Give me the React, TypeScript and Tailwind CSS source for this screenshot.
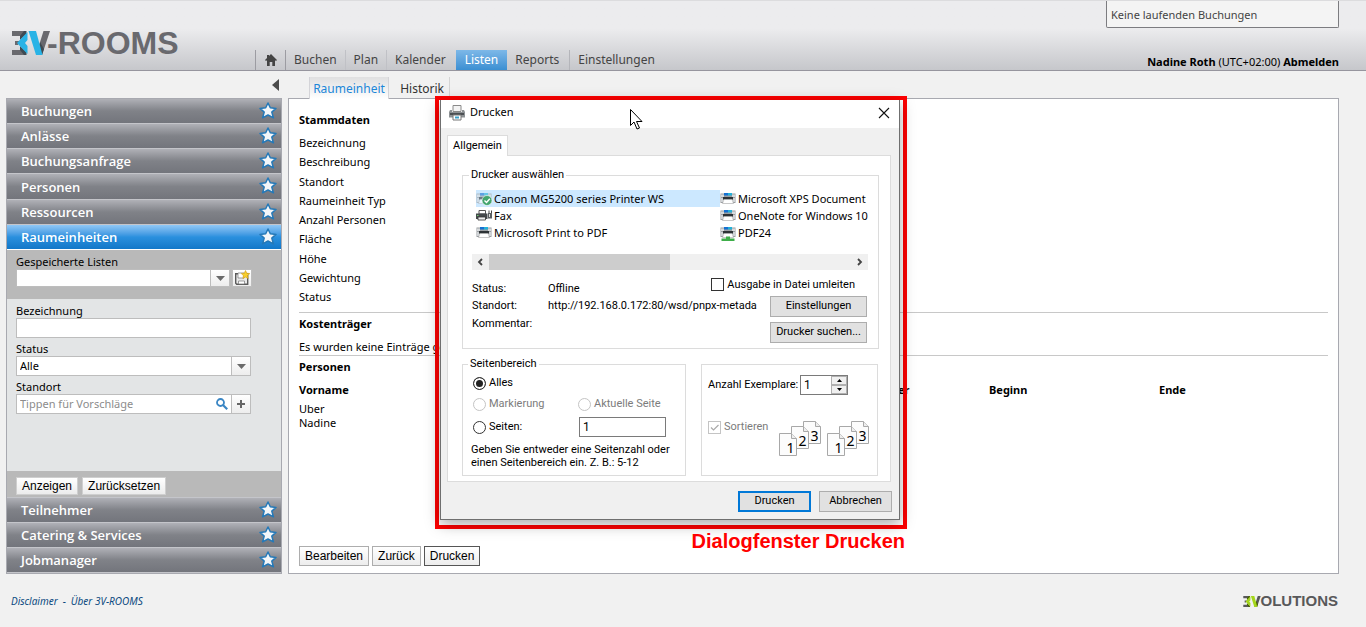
import type { ReactNode } from "react";

const SECTIONS_TOP = ["Buchungen", "Anlässe", "Buchungsanfrage", "Personen", "Ressourcen"];
const SECTIONS_BOTTOM = ["Teilnehmer", "Catering & Services", "Jobmanager"];
const NAV = [
  { label: "Buchen", className: "border-r border-[#c0c1c6] px-2" },
  { label: "Plan", className: "border-r border-[#c0c1c6] px-2" },
  { label: "Kalender", className: "pr-[10px] pl-2" },
  { label: "Listen", className: "bg-linear-to-b from-[#7db8e8] to-[#3a8fd2] px-[9px] text-white" },
  { label: "Reports", className: "border-r border-[#b4b5ba] pr-[10px] pl-2" },
  { label: "Einstellungen", className: "px-2" },
];
const FIELDS = [
  "Bezeichnung",
  "Beschreibung",
  "Standort",
  "Raumeinheit Typ",
  "Anzahl Personen",
  "Fläche",
  "Höhe",
  "Gewichtung",
  "Status",
];

function Mark({ className, accent, facet, base }: { className: string; accent: string; facet: string; base: string }) {
  return (
    <svg viewBox="0 0 38 24" className={className} aria-hidden="true">
      <path d="M0 0h14l-4 5H0zM3 10h5l-2 4H3zM0 19h10l4 5H0z" fill={base} />
      <path d="M8 5L12 0h2.500v3L8 9zM8 19l4 5h2.500v-3L8 15z" fill={facet} />
      <path d="M15.500 1v8L13 12l2.500 3v8L5 12z" fill={accent} />
      <path d="M31.500 0H38l-8 24h-6z" fill={base} />
      <path d="M28 11l4 7-2 6h-4z" fill={facet} />
      <path d="M16.500 0H24l6.500 24H24z" fill={accent} />
    </svg>
  );
}

function Star() {
  return (
    <svg viewBox="0 0 18 17" className="mt-px h-[17px] w-[18px] shrink-0 self-start" aria-hidden="true">
      <path
        d="M9 1l2.300 4.800 5.700.6-4.200 3.700 1.600 5.700L9 13l-5.400 2.800 1.600-5.700L1 6.400l5.700-.6z"
        fill="#f3f6f9"
        stroke="#2579b8"
        strokeWidth="1.500"
        strokeLinejoin="round"
      />
    </svg>
  );
}

function Section({ label, active = false, tall = false }: { label: string; active?: boolean; tall?: boolean }) {
  return (
    <button
      type="button"
      className={`flex w-full items-center justify-between border-b pt-0.5 pr-1 pl-3.5 font-['Open_Sans',sans-serif] text-[13px] font-semibold text-white ${
        tall ? "h-[26px]" : "h-[25px]"
      } ${
        active
          ? "border-white bg-linear-to-b from-[#8fc7f5] via-[#2a90de] to-[#1277c8]"
          : "border-[#c4c5ca] bg-linear-to-b from-[#b0b1b7] via-[#808288] to-[#73757c]"
      }`}
    >
      {label}
      <Star />
    </button>
  );
}

function Caret() {
  return (
    <svg viewBox="0 0 9 5" className="h-[5px] w-[9px]" aria-hidden="true">
      <path d="M0 0h9L4.500 5z" fill="#6a6a6a" />
    </svg>
  );
}

function PrinterIcon({ kind }: { kind: "ok" | "fax" | "plain" | "net" }) {
  return (
    <svg viewBox="0 0 17 17" className="h-[17px] w-[17px] shrink-0" aria-hidden="true">
      {kind === "fax" ? (
        <g>
          <path d="M3 3.500h6.500V7H3z" fill="#fff" stroke="#555" />
          <path d="M0 6.500h11.500V12H0z" fill="#45494c" />
          <path d="M1 8h1.500v1H1z" fill="#6fd06f" />
          <path d="M2 10h7.500v3H2z" fill="#eee" stroke="#333" strokeWidth="0.800" />
          <path d="M12 6h4v5.500h-4z" fill="#5b5f62" />
          <path d="M13 7h1v3h-1z" fill="#ddd" />
          <path d="M13 3.500V6M15.500 3.500V6" stroke="#444" />
        </g>
      ) : (
        <g opacity={kind === "ok" ? 0.6 : 1}>
          <path d="M.5 3.500h15V13h-2.500V10H3v3H.500z" fill="#9a9ea1" />
          <path d="M1 4.500h3V7H1zM12 4.500h3V7h-3z" fill="#d8dbdd" />
          <path d="M1 8h2v4H1zM13 8h2v4h-2z" fill="#d0d3d6" />
          <path d="M4 3h4v2.500H4z" fill="#1470d2" />
          <path d="M8 3h4v2.500H8z" fill="#22b0d8" />
          <path d="M3 7h10v2.500H3z" fill="#2d3235" />
          <path d="M4 9.500h8l1.500 4h-11z" fill="#fff" stroke="#a5a5a5" strokeWidth="0.600" />
          {kind === "net" && <path d="M6 12.500h4v2h4.500V17h-13v-2.500H6z" fill="#3eae49" />}
        </g>
      )}
      {kind === "ok" && (
        <g>
          <circle cx="11" cy="10.500" r="5" fill="#43a56f" stroke="#fff" strokeWidth="0.600" />
          <path d="M8.500 10.500l2 2 3.300-3.800" fill="none" stroke="#fff" strokeWidth="1.400" />
        </g>
      )}
    </svg>
  );
}

function TitlePrinter() {
  return (
    <svg viewBox="0 0 16 16" className="h-4 w-4" aria-hidden="true">
      <path d="M4 .5h8v6H4z" fill="#f4f4f4" stroke="#8a8a8a" />
      <path d="M1 5h2v2h10V5h2l1 2v5.500H0V7z" fill="#8d9194" />
      <path d="M1 8h14v2H1z" fill="#4b4f52" />
      <path d="M4 10h8v5H4z" fill="#fff" stroke="#777" />
      <path d="M6 11.500h4v2H6z" fill="#3aa0c8" />
    </svg>
  );
}

function Pages() {
  const sheets = [
    { x: 0, y: 12, n: "1" },
    { x: 12, y: 5, n: "2" },
    { x: 24, y: 0, n: "3" },
  ];
  return (
    <svg viewBox="0 0 43 36" className="h-9 w-[43px]" aria-hidden="true">
      {[...sheets].reverse().map((s) => (
        <g key={s.n} transform={`translate(${s.x} ${s.y})`}>
          <path d="M.5.500h12l5 5v17H.5z" fill="#fcfcfc" stroke="#a8a8a8" />
          <path d="M12.500.500v5h5" fill="#eee" stroke="#a8a8a8" />
          <text x="11.500" y="20" textAnchor="middle" fontSize="14" fontFamily="Noto Sans" fill="#000">
            {s.n}
          </text>
        </g>
      ))}
    </svg>
  );
}

function Group({ legend, className, children }: { legend?: string; className: string; children: ReactNode }) {
  return (
    <fieldset className={`min-w-0 shrink-0 border border-[#dcdcdc] ${className}`}>
      {legend && <legend className="-ml-[3px] px-0.5 leading-[14px]">{legend}</legend>}
      {children}
    </fieldset>
  );
}

function Radio({ id, label, checked = false, disabled = false }: { id: string; label: string; checked?: boolean; disabled?: boolean }) {
  return (
    <div className="flex items-center gap-[3px]">
      <input
        id={id}
        type="radio"
        name="range"
        defaultChecked={checked}
        disabled={disabled}
        className="size-[13px] appearance-none rounded-full border border-[#333] bg-white checked:bg-[#222] checked:shadow-[inset_0_0_0_2px_#fff] disabled:border-[#c4c4c4]"
      />
      <label htmlFor={id} className={disabled ? "text-[#7c7c7c]" : ""}>
        {label}
      </label>
    </div>
  );
}

function PrintDialog() {
  const btn = "flex h-[21px] items-center justify-center border border-[#adadad] bg-[#e1e1e1]";
  return (
    <div
      role="dialog"
      aria-label="Drucken"
      className="ml-px flex h-[420px] w-[460px] flex-col border border-t-0 border-[#6f6f6f] bg-[#f0f0f0] font-['Roboto',sans-serif] text-[11px] text-black shadow-[0_4px_14px_rgba(0,0,0,0.35)]"
    >
      <div className="flex h-7 shrink-0 items-center bg-white pr-[9px] pb-[3px] pl-2 font-['Noto_Sans',sans-serif] text-[11px]">
        <TitlePrinter />
        <span className="ml-[5px] flex-1">Drucken</span>
        <button type="button" aria-label="Schliessen">
          <svg viewBox="0 0 12 12" className="h-3 w-3" aria-hidden="true">
            <path d="M1 1l10 10M11 1L1 11" stroke="#111" strokeWidth="1.100" />
          </svg>
        </button>
      </div>
      <div className="px-[6px] pt-[7px]">
        <div className="-mb-px flex">
          <button type="button" className="relative h-[21px] w-[61px] border border-b-0 border-[#dcdcdc] bg-white">
            Allgemein
          </button>
        </div>
        <div className="h-[327px] w-[444px] border border-[#dcdcdc] bg-white pt-3 pl-[14px]">
          <Group legend="Drucker auswählen" className="h-[181px] w-[417px] pr-2 pl-[9px]">
            <div className="mt-2 flex overflow-hidden pl-1 font-['Noto_Sans',sans-serif] text-[11px] leading-[17px] whitespace-nowrap">
              <ul className="w-[244px] shrink-0">
                <li className="flex gap-px bg-[#cce8ff]">
                  <PrinterIcon kind="ok" />
                  Canon MG5200 series Printer WS
                </li>
                <li className="flex gap-px">
                  <PrinterIcon kind="fax" />
                  Fax
                </li>
                <li className="flex gap-px">
                  <PrinterIcon kind="plain" />
                  Microsoft Print to PDF
                </li>
              </ul>
              <ul className="w-[149px]">
                <li className="flex gap-px">
                  <PrinterIcon kind="plain" />
                  Microsoft XPS Document
                </li>
                <li className="flex gap-px">
                  <PrinterIcon kind="plain" />
                  OneNote for Windows 10
                </li>
                <li className="flex gap-px">
                  <PrinterIcon kind="net" />
                  PDF24
                </li>
              </ul>
            </div>
            <div className="mt-[13px] flex h-4 w-[396px] items-center justify-between bg-[#f0f0f0]">
              <svg viewBox="0 0 17 16" className="h-4 w-[17px]" aria-hidden="true">
                <path d="M10 5L7 8l3 3" fill="none" stroke="#444" strokeWidth="1.800" />
              </svg>
              <div className="mr-auto h-4 w-[181px] bg-[#cdcdcd]" />
              <svg viewBox="0 0 17 16" className="h-4 w-[17px]" aria-hidden="true">
                <path d="M7 5l3 3-3 3" fill="none" stroke="#444" strokeWidth="1.800" />
              </svg>
            </div>
            <div className="mt-2 flex gap-[18px] whitespace-nowrap">
              <dl className="grid w-[280px] shrink-0 grid-cols-[76px_204px] content-start leading-[17px]">
                <dt className="pt-0.5">Status:</dt>
                <dd className="pt-0.5">Offline</dd>
                <dt>Standort:</dt>
                <dd>http://192.168.0.172:80/wsd/pnpx-metada</dd>
                <dt className="pt-px">Kommentar:</dt>
                <dd />
              </dl>
              <div className="flex w-[97px] shrink-0 flex-col items-end gap-[5px]">
                <div className="mr-3 flex items-center gap-[3px]">
                  <input id="tofile" type="checkbox" className="size-[13px] shrink-0 appearance-none border border-[#333] bg-white" />
                  <label htmlFor="tofile" className="leading-[13px]">
                    Ausgabe in Datei umleiten
                  </label>
                </div>
                <button type="button" className={`${btn} w-[97px]`}>
                  Einstellungen
                </button>
                <button type="button" className={`${btn} w-[97px]`}>
                  Drucker suchen...
                </button>
              </div>
            </div>
          </Group>
          <div className="mt-2 flex gap-[15px]">
            <Group legend="Seitenbereich" className="h-[119px] w-[224px] px-2">
              <div className="grid grid-cols-[105px_1fr] items-center pt-0.5 pl-0.5">
                <div className="flex h-5 items-center">
                  <Radio id="all" label="Alles" checked />
                </div>
                <span />
                <div className="flex h-[22px] items-center">
                  <Radio id="selection" label="Markierung" disabled />
                </div>
                <Radio id="current" label="Aktuelle Seite" disabled />
                <div className="flex h-6 items-center">
                  <Radio id="pages" label="Seiten:" />
                </div>
                <input
                  aria-label="Seiten"
                  defaultValue="1"
                  className="ml-px h-5 w-[87px] border border-[#7a7a7a] bg-white px-[3px] text-[12px]"
                />
              </div>
              <p className="mt-1 leading-[13px] whitespace-nowrap">
                Geben Sie entweder eine Seitenzahl oder
                <br />
                einen Seitenbereich ein. Z. B.: 5-12
              </p>
            </Group>
            <Group className="mt-[7px] h-28 w-[177px] px-1.5 pt-[10px]">
              <div className="flex h-5 items-center">
                <label htmlFor="copies" className="w-[92px]">
                  Anzahl Exemplare:
                </label>
                <div className="flex h-5 w-12 border border-[#7a7a7a] bg-white">
                  <input id="copies" defaultValue="1" className="w-[30px] px-[3px] text-[12px]" />
                  <div className="flex flex-1 flex-col">
                    <button type="button" aria-label="Mehr" className="flex flex-1 items-center justify-center border border-[#b0b0b0] bg-[#f0f0f0]">
                      <svg viewBox="0 0 5 3" className="h-[3px] w-[5px]">
                        <path d="M0 3h5L2.500 0z" />
                      </svg>
                    </button>
                    <button type="button" aria-label="Weniger" className="flex flex-1 items-center justify-center border border-[#b0b0b0] bg-[#f0f0f0]">
                      <svg viewBox="0 0 5 3" className="h-[3px] w-[5px]">
                        <path d="M0 0h5L2.500 3z" />
                      </svg>
                    </button>
                  </div>
                </div>
              </div>
              <div className="mt-[26px] flex">
                <div className="flex h-[13px] w-[71px] items-center gap-[3px]">
                  <span className="relative flex size-[13px]">
                    <input id="collate" type="checkbox" defaultChecked disabled className="size-[13px] appearance-none border border-[#c4c4c4] bg-white" />
                    <svg viewBox="0 0 13 13" className="absolute inset-0 h-[13px] w-[13px]" aria-hidden="true">
                      <path d="M3 6.500l2.500 2.500L10.500 4" fill="none" stroke="#aaa" strokeWidth="1.200" />
                    </svg>
                  </span>
                  <label htmlFor="collate" className="text-[#7c7c7c]">
                    Sortieren
                  </label>
                </div>
                <div className="flex gap-[5px]">
                  <Pages />
                  <Pages />
                </div>
              </div>
            </Group>
          </div>
        </div>
        <div className="mt-[9px] flex justify-end gap-2 pr-px">
          <button type="button" className="flex h-[21px] w-[73px] items-center justify-center border-2 border-[#0078d7] bg-[#e1e1e1]">
            Drucken
          </button>
          <button type="button" className={`${btn} w-[73px]`}>
            Abbrechen
          </button>
        </div>
      </div>
    </div>
  );
}

function Sidebar() {
  const box = "border border-[#bdbdbd] bg-white";
  const small = "flex w-5 shrink-0 items-center justify-center border border-[#bdbdbd] bg-linear-to-b from-white to-[#ededed]";
  const action = "h-[18px] border border-[#cfcfcf] bg-linear-to-b from-white to-[#ececec] px-[5px] leading-4";
  return (
    <aside className="w-[276px] shrink-0">
      <div className="flex h-[27px] items-center justify-end pr-[3px]">
        <button type="button" aria-label="Seitenleiste einklappen">
          <svg viewBox="0 0 7 12" className="h-3 w-[7px]" aria-hidden="true">
            <path d="M7 0v12L0 6z" fill="#4c4c4c" />
          </svg>
        </button>
      </div>
      <div className="border border-[#a8a9b0]">
        {SECTIONS_TOP.map((s) => (
          <Section key={s} label={s} tall={s === "Personen"} />
        ))}
        <Section label="Raumeinheiten" active />
        <div className="h-[49px] bg-[#b9b9b9] px-[9px] pt-1">
          <label htmlFor="saved" className="block leading-[15px]">
            Gespeicherte Listen
          </label>
          <div className="flex h-[18px]">
            <input id="saved" className={`${box} w-[195px]`} />
            <button type="button" aria-label="Liste öffnen" className={`${small} -ml-px`}>
              <Caret />
            </button>
            <button type="button" aria-label="Liste speichern" className={`${small} ml-[2px]`}>
              <svg viewBox="0 0 16 16" className="h-4 w-4" aria-hidden="true">
                <path d="M1.700 3.700h12v10.600h-11l-1-1z" fill="#e9e9e9" stroke="#5a5a5a" strokeWidth="1.400" />
                <path d="M4 3h6v5H4z" fill="#fff" stroke="#777" strokeWidth="0.700" />
                <path d="M4.500 11h6v3h-6z" fill="#fff" stroke="#777" strokeWidth="0.700" />
                <path d="M11.500.500l1.300 2.700 3 .4-2.200 2 .6 2.900-2.700-1.400-2.600 1.400.5-2.900-2.100-2 3-.4z" fill="#f8cf2c" stroke="#d29a12" strokeWidth="0.600" />
              </svg>
            </button>
          </div>
        </div>
        <div className="flex h-[172px] flex-col gap-[3px] bg-[#e3e5e6] px-[9px] pt-1">
          <div>
            <label htmlFor="name" className="block leading-[15px]">
              Bezeichnung
            </label>
            <input id="name" className={`${box} block h-5 w-[235px]`} />
          </div>
          <div>
            <label htmlFor="status" className="block leading-[15px]">
              Status
            </label>
            <div className="flex h-5 w-[235px]">
              <select id="status" className={`${box} flex-1 appearance-none px-[3px]`}>
                <option>Alle</option>
              </select>
              <span className={`${small} -ml-px`}>
                <Caret />
              </span>
            </div>
          </div>
          <div>
            <label htmlFor="place" className="block leading-[15px]">
              Standort
            </label>
            <div className="flex h-5 w-[235px]">
              <div className={`${box} flex flex-1 items-center px-[3px]`}>
                <input id="place" placeholder="Tippen für Vorschläge" className="min-w-0 flex-1 placeholder:text-[#8c8c8c]" />
                <svg viewBox="0 0 12 12" className="h-3 w-3" aria-hidden="true">
                  <circle cx="4.500" cy="4.500" r="3.500" fill="none" stroke="#3a86c4" strokeWidth="1.800" />
                  <path d="M7 7l4.200 4.200" stroke="#3a86c4" strokeWidth="2.200" />
                </svg>
              </div>
              <button type="button" aria-label="Standort hinzufügen" className={`${small} -ml-px`}>
                <svg viewBox="0 0 8 8" className="h-2 w-2" aria-hidden="true">
                  <path d="M4 0v8M0 4h8" stroke="#666" strokeWidth="2" />
                </svg>
              </button>
            </div>
          </div>
        </div>
        <div className="flex h-[27px] items-start gap-1 border-b border-[#c4c5ca] bg-[#b9b9b9] px-[9px] pt-[6px] font-['Liberation_Sans',sans-serif] text-[12px]">
          <button type="button" className={action}>
            Anzeigen
          </button>
          <button type="button" className={action}>
            Zurücksetzen
          </button>
        </div>
        {SECTIONS_BOTTOM.map((s) => (
          <Section key={s} label={s} />
        ))}
      </div>
    </aside>
  );
}

function Details() {
  const btn = "h-5 border border-[#adadad] bg-linear-to-b from-white to-[#ededed] px-[5px] leading-[18px]";
  return (
    <main className="flex min-w-0 flex-1 flex-col">
      <nav className="flex h-[27px] items-end pl-[21px] text-[12px]">
        <a
          href="#raumeinheit"
          className="relative -mb-px flex h-[22px] w-[80px] items-center justify-center border-x border-[#d4d4d8] bg-linear-to-b from-[#e0e0e1] to-white pt-0.5 text-[#1c86d8]"
        >
          Raumeinheit
        </a>
        <a href="#historik" className="flex h-[21px] w-[61px] items-center justify-end border-r border-[#d4d4d4] pt-0.5 pr-[5px] text-[#333]">
          Historik
        </a>
      </nav>
      <section className="flex flex-1 flex-col border border-[#a8a9b0] bg-white px-[10px] pt-3 pb-[7px]">
        <h2 className="leading-[17px] font-bold">Stammdaten</h2>
        <ul className="mt-[6px] flex h-[171px] flex-col justify-between leading-[17px]">
          {FIELDS.map((f) => (
            <li key={f}>{f}</li>
          ))}
        </ul>
        <h2 className="mt-[7px] border-t border-[#c8c8c8] pt-[2px] leading-[17px] font-bold">Kostenträger</h2>
        <p className="mt-[6px] leading-[17px]">Es wurden keine Einträge gefunden.</p>
        <h2 className="border-t border-[#c8c8c8] pt-[2px] leading-[17px] font-bold">Personen</h2>
        <table className="mt-[6px] w-full table-fixed text-left leading-[14px]">
          <thead>
            <tr className="leading-[17px]">
              <th className="w-[599px] pb-1">Vorname</th>
              <th className="w-[91px] pb-1">er</th>
              <th className="w-[170px] pb-1">Beginn</th>
              <th className="pb-1">Ende</th>
            </tr>
          </thead>
          <tbody>
            <tr>
              <td colSpan={4}>Uber</td>
            </tr>
            <tr>
              <td colSpan={4}>Nadine</td>
            </tr>
          </tbody>
        </table>
        <div className="mt-auto flex gap-[3px] font-['Liberation_Sans',sans-serif] text-[12px]">
          <button type="button" className={btn}>
            Bearbeiten
          </button>
          <button type="button" className={btn}>
            Zurück
          </button>
          <button type="button" className="h-5 border border-[#555] bg-linear-to-b from-white to-[#ededed] px-[5px] leading-[18px]">
            Drucken
          </button>
        </div>
      </section>
    </main>
  );
}

export default function App() {
  return (
    <div className="relative min-h-screen bg-[#f1f1f1] font-['Noto_Sans',sans-serif] text-[11px] text-black">
      <header className="flex h-[71px] justify-between border-t border-b border-t-[#dcdcde] border-b-[#96959e] bg-linear-to-b from-[#ececee] from-40% to-[#c6c7cb] pr-[27px] pl-3">
        <div className="flex">
          <div className="flex w-[243px] items-start pt-[30px]">
            <Mark className="h-6 w-[38px]" accent="#29b3e6" facet="#3f4a52" base="#69696e" />
            <span className="-ml-[3px] font-['Liberation_Sans',sans-serif] text-[32px] leading-6 font-bold text-[#69696e]">-ROOMS</span>
          </div>
          <nav className="flex items-end text-[12px] text-[#444]">
            <a href="#home" aria-label="Start" className="flex h-5 w-[31px] items-center justify-center border-x border-[#9c9ca2]">
              <svg viewBox="0 0 12 12" className="h-3 w-3" aria-hidden="true">
                <path d="M6 0l6 6-1 1-1-.8V12H7.300V8H4.700v4H2V6.200L1 7 0 6l2-2V1h2v1z" fill="#444" />
              </svg>
            </a>
            {NAV.map((n) => (
              <a key={n.label} href={`#${n.label.toLowerCase()}`} className={`flex h-5 items-center ${n.className}`}>
                {n.label}
              </a>
            ))}
          </nav>
        </div>
        <div className="flex flex-col items-end justify-between">
          <div className="h-[27px] w-[233px] rounded-b-xs border border-t-0 border-[#7c7c80] bg-[#f4f4f4] pl-1 leading-7 text-[#444]">Keine laufenden Buchungen</div>
          <p className="leading-4">
            <strong>Nadine Roth</strong> (UTC+02:00){" "}
            <a href="#abmelden" className="font-bold">
              Abmelden
            </a>
          </p>
        </div>
      </header>
      <div className="flex gap-[6px] pr-[27px] pl-[6px]">
        <Sidebar />
        <Details />
      </div>
      <footer className="flex items-center justify-between pt-[18px] pr-[28px] pl-[11px]">
        <p className="text-[10px] text-[#0c4a80] italic">
          <a href="#disclaimer">Disclaimer</a>
          <span className="mx-[5px]">-</span>
          <a href="#about">Über 3V-ROOMS</a>
        </p>
        <div className="flex items-center">
          <Mark className="h-[11px] w-[18px]" accent="#a4d61a" facet="#4a6500" base="#58585a" />
          <span className="font-['Liberation_Sans',sans-serif] text-[15px] leading-[18px] font-bold text-[#58585a]">OLUTIONS</span>
        </div>
      </footer>
      <div className="absolute top-[96px] left-[435px] w-[472px]">
        <div className="h-[433px] border-4 border-[#f00]">
          <PrintDialog />
        </div>
        <p className="pr-0.5 text-right font-['Liberation_Sans',sans-serif] text-[20px] leading-6 font-bold whitespace-nowrap text-[#f00]">Dialogfenster Drucken</p>
      </div>
      <svg viewBox="0 0 13 21" className="absolute top-[109px] left-[630px] h-[21px] w-[13px]" aria-hidden="true">
        <path d="M.5.500v16l3.500-3.500 3 7 2.500-1-3-6.500h5.500z" fill="#fff" stroke="#000" />
      </svg>
    </div>
  );
}
